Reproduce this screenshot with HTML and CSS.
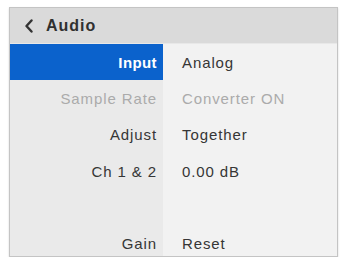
FILE: index.html
```html
<!DOCTYPE html>
<html lang="en">
<head>
<meta charset="UTF-8" />
<title>Audio</title>
<link rel="stylesheet" href="styles.css">
</head>
<body>
<div class="panel">
    <div class="header">
        <svg class="back" width="10" height="14" viewBox="0 0 10 14"><path d="M7.5 1.5 L2.5 7 L7.5 12.5" fill="none" stroke="#333" stroke-width="2.4" stroke-linecap="round" stroke-linejoin="round"/></svg>
        <span class="title">Audio</span>
    </div>
    <div class="rows">
        <div class="row selected"><div class="label">Input</div><div class="value">Analog</div></div>
        <div class="row disabled"><div class="label">Sample Rate</div><div class="value">Converter ON</div></div>
        <div class="row"><div class="label">Adjust</div><div class="value">Together</div></div>
        <div class="row"><div class="label">Ch 1 &amp; 2</div><div class="value">0.00 dB</div></div>
        <div class="row"><div class="label"></div><div class="value"></div></div>
        <div class="row"><div class="label">Gain</div><div class="value">Reset</div></div>
    </div>
</div>
</body>
</html>
```
FILE: styles.css
```css
* {
    margin: 0;
    padding: 0;
    box-sizing: border-box;
}
body {
    background: #fff;
    font-family: "Liberation Sans", Arial, sans-serif;
    padding: 7px 0 0 9px;
}
.panel {
    width: 329px;
    height: 250px;
    border: 1px solid #c4c4c4;
    background: #f2f2f2;
    overflow: hidden;
    box-shadow: 0 1px 2px rgba(0,0,0,0.15);
    display: flex;
    flex-direction: column;
}
.header {
    height: 36px;
    flex: none;
    background: #dadada;
    display: flex;
    align-items: center;
    padding-left: 14px;
    gap: 12px;
    border-bottom: 1px solid #e8e8e8;
}
.title {
    font-size: 16px;
    font-weight: bold;
    letter-spacing: 1px;
    color: #303030;
}
.rows {
    display: flex;
    flex-direction: column;
}
.row {
    height: 36.3px;
    display: flex;
    align-items: center;
    font-size: 15px;
    letter-spacing: 0.9px;
    color: #363636;
}
.label {
    width: 153px;
    height: 100%;
    background: #eaeaea;
    display: flex;
    align-items: center;
    justify-content: flex-end;
    padding-right: 6px;
}
.value {
    padding-left: 19px;
}
.selected .label {
    background: #0b62cc;
    color: #fff;
    font-weight: bold;
    letter-spacing: 0.4px;
}
.disabled {
    color: #ababab;
}
```
